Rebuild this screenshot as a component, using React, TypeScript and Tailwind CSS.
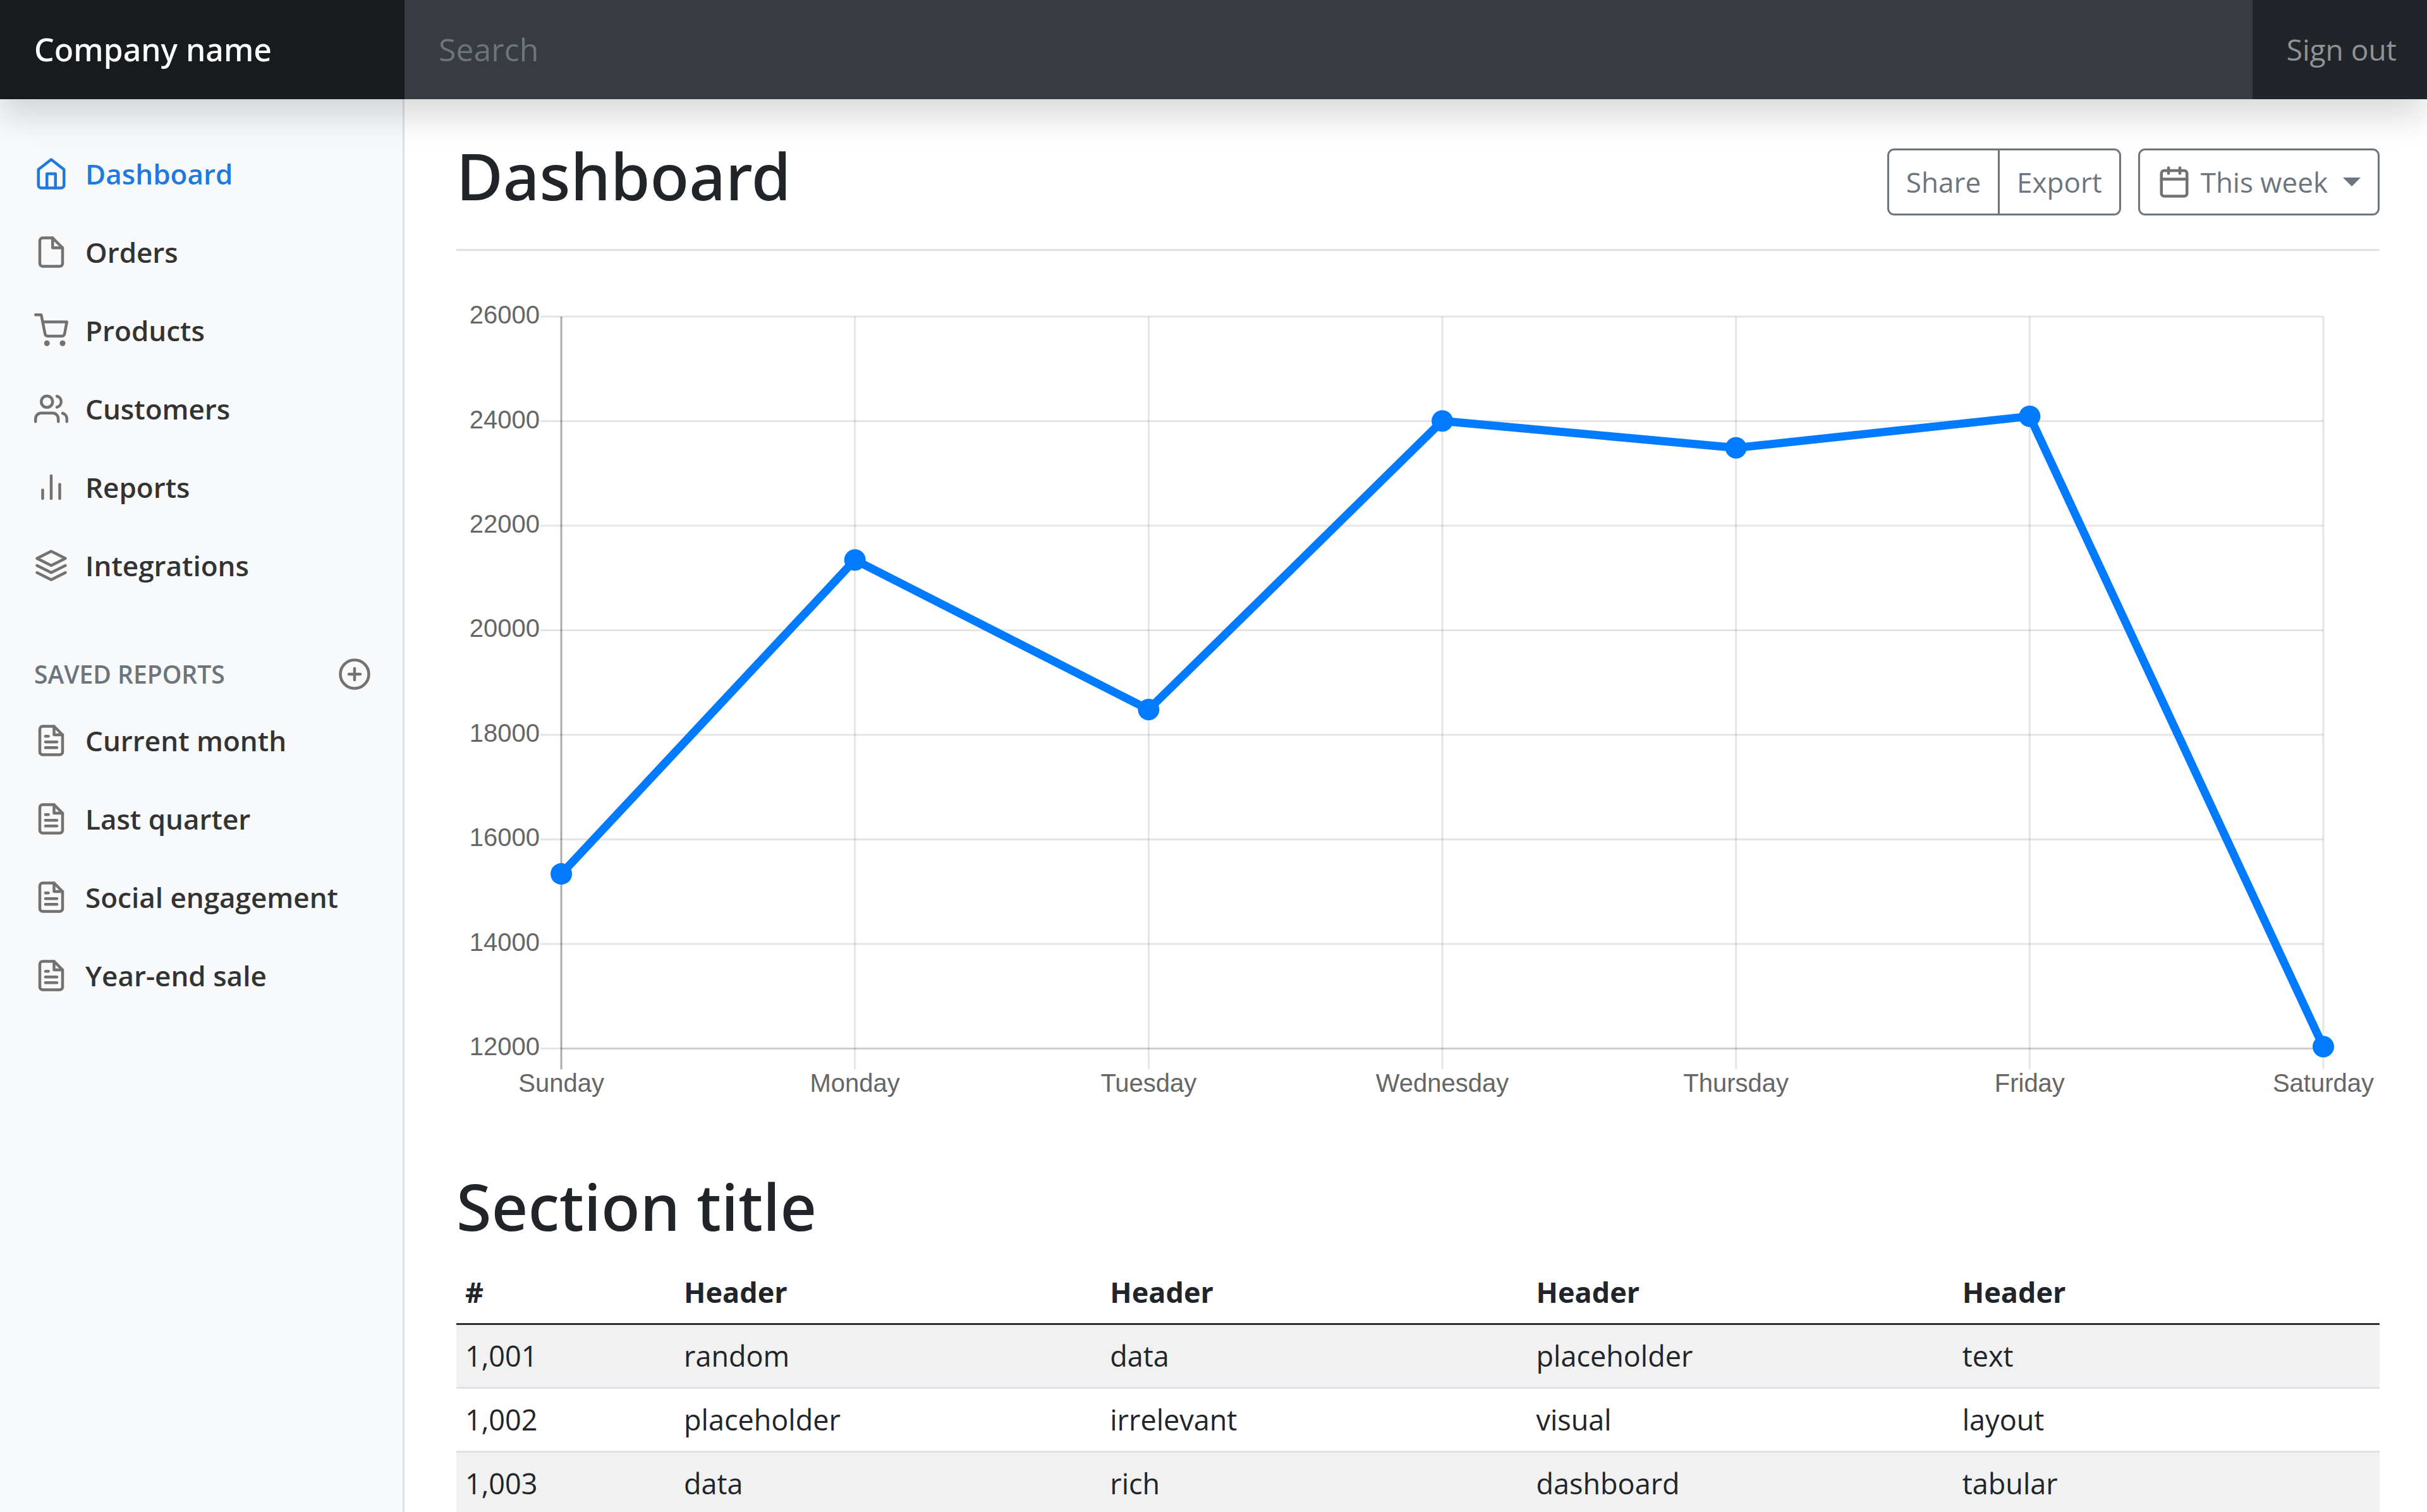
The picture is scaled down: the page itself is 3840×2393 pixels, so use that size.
import {
  FiBarChart2,
  FiCalendar,
  FiFile,
  FiFileText,
  FiHome,
  FiLayers,
  FiPlusCircle,
  FiShoppingCart,
  FiUsers,
} from "react-icons/fi";
import type { IconType } from "react-icons";

interface NavItem {
  label: string;
  icon: IconType;
  active?: boolean;
}

const mainNav: NavItem[] = [
  { label: "Dashboard", icon: FiHome, active: true },
  { label: "Orders", icon: FiFile },
  { label: "Products", icon: FiShoppingCart },
  { label: "Customers", icon: FiUsers },
  { label: "Reports", icon: FiBarChart2 },
  { label: "Integrations", icon: FiLayers },
];

const savedReports: NavItem[] = [
  { label: "Current month", icon: FiFileText },
  { label: "Last quarter", icon: FiFileText },
  { label: "Social engagement", icon: FiFileText },
  { label: "Year-end sale", icon: FiFileText },
];

const traffic = [
  { day: "Sunday", value: 15339 },
  { day: "Monday", value: 21345 },
  { day: "Tuesday", value: 18483 },
  { day: "Wednesday", value: 24003 },
  { day: "Thursday", value: 23489 },
  { day: "Friday", value: 24092 },
  { day: "Saturday", value: 12034 },
];

const ticks = [26000, 24000, 22000, 20000, 18000, 16000, 14000, 12000];

const rows = [
  ["1,001", "random", "data", "placeholder", "text"],
  ["1,002", "placeholder", "irrelevant", "visual", "layout"],
  ["1,003", "data", "rich", "dashboard", "tabular"],
];

function NavList({ items }: { items: NavItem[] }) {
  return (
    <ul>
      {items.map(({ label, icon: Icon, active }) => (
        <li key={label}>
          <a
            href="#"
            aria-current={active ? "page" : undefined}
            className={`flex h-[124px] items-center gap-[27px] px-[54px] text-[44px] font-semibold whitespace-nowrap ${
              active ? "text-[#2079dc]" : "text-[#333333]"
            }`}
          >
            <Icon size={54} className={active ? "shrink-0" : "shrink-0 text-[#727272]"} />
            {label}
          </a>
        </li>
      ))}
    </ul>
  );
}

// Plot area inside the 3042 x 1310 viewBox
const LEFT = 166;
const RIGHT = 2953;
const TOP = 61;
const BOTTOM = 1219;

const xAt = (i: number) => LEFT + (i * (RIGHT - LEFT)) / (traffic.length - 1);
const yAt = (v: number) => BOTTOM - ((v - 12000) / 14000) * (BOTTOM - TOP);

function Chart() {
  const points = traffic.map((d, i) => `${xAt(i)},${yAt(d.value)}`).join(" ");

  return (
    <svg
      viewBox="0 0 3042 1310"
      role="img"
      aria-label="Weekly traffic"
      className="mt-[43px] block w-full font-['Liberation_Sans',Arial,sans-serif] text-[40px]"
    >
      {ticks.map((t) => (
        <g key={t}>
          <line x1={LEFT - 33} x2={RIGHT} y1={yAt(t)} y2={yAt(t)} stroke="#000" strokeOpacity={0.1} strokeWidth={3} />
          <text x={LEFT - 34} y={yAt(t) + 11} textAnchor="end" fill="#666">
            {t}
          </text>
        </g>
      ))}
      {traffic.map((d, i) => (
        <g key={d.day}>
          <line x1={xAt(i)} x2={xAt(i)} y1={TOP} y2={BOTTOM + 33} stroke="#000" strokeOpacity={0.1} strokeWidth={3} />
          <text x={xAt(i)} y={BOTTOM + 69} textAnchor="middle" fill="#666">
            {d.day}
          </text>
        </g>
      ))}

      {/* Axes */}
      <line x1={LEFT} x2={LEFT} y1={TOP} y2={BOTTOM + 33} stroke="#000" strokeOpacity={0.25} strokeWidth={3} />
      <line x1={LEFT} x2={RIGHT} y1={BOTTOM} y2={BOTTOM} stroke="#000" strokeOpacity={0.1} strokeWidth={3} />

      <polyline points={points} fill="none" stroke="#007bff" strokeWidth={13} strokeLinejoin="round" />
      {traffic.map((d, i) => (
        <circle key={d.day} cx={xAt(i)} cy={yAt(d.value)} r={17} fill="#007bff" />
      ))}
    </svg>
  );
}

export default function App() {
  return (
    <div className="flex h-screen flex-col overflow-hidden bg-white font-['Open_Sans','Noto_Sans',sans-serif] text-[#212529]">
      <header className="relative z-10 flex h-[157px] shrink-0 bg-[#212529] shadow-[0_27px_54px_rgba(0,0,0,0.15)]">
        <a
          href="#"
          className="flex w-1/6 items-center bg-black/25 px-[54px] font-['Noto_Sans','Open_Sans',sans-serif] text-[50px] font-medium whitespace-nowrap text-white"
        >
          Company name
        </a>
        <input
          type="search"
          aria-label="Search"
          placeholder="Search"
          className="min-w-0 flex-1 bg-[#383b3f] px-[54px] text-[50px] text-white outline-none placeholder:text-[#6c757d]"
        />
        <a href="#" className="flex items-center pr-[48px] pl-[54px] text-[46px] whitespace-nowrap text-white/50">
          Sign out
        </a>
      </header>

      <div className="flex min-h-0 flex-1">
        <nav className="w-1/6 shrink-0 border-r-3 border-black/10 bg-[#f8f9fa] pt-[56px]">
          <NavList items={mainNav} />
          <div className="mt-[72px] mb-[5px] flex h-[76px] items-center justify-between pr-[49px] pl-[54px] text-[#6c757d]">
            <h2 className="text-[39px] font-semibold uppercase">Saved reports</h2>
            <button type="button" aria-label="Add a new report">
              <FiPlusCircle size={54} className="text-[#727272]" />
            </button>
          </div>
          <NavList items={savedReports} />
        </nav>

        <main className="min-w-0 flex-1 pt-[54px] pr-[75px] pl-[82px]">
          <div className="flex h-[186px] items-start justify-between border-b-3 border-[#dee2e6]">
            <h1 className="font-['Noto_Sans','Open_Sans',sans-serif] text-[101px] leading-[134px] font-medium">
              Dashboard
            </h1>
            <div className="mt-[24px] flex h-[106px] items-stretch gap-[27px] text-[44px] text-[#6c757d]">
              <div className="flex">
                <button type="button" className="rounded-l-[11px] border-3 border-[#6c757d] px-[27px]">
                  Share
                </button>
                <button type="button" className="-ml-[3px] rounded-r-[11px] border-3 border-[#6c757d] px-[27px]">
                  Export
                </button>
              </div>
              <button
                type="button"
                className="flex items-center rounded-[11px] border-3 border-[#6c757d] px-[27px]"
              >
                <FiCalendar size={54} className="mr-[15px] text-[#727272]" />
                This week
                <span className="ml-[24px] border-x-14 border-t-14 border-x-transparent border-t-[#6c757d]" />
              </button>
            </div>
          </div>

          <Chart />

          <h2 className="mt-[92px] font-['Noto_Sans','Open_Sans',sans-serif] text-[101px] leading-[134px] font-medium">
            Section title
          </h2>
          <table className="mt-[20px] w-full table-fixed text-left text-[45px] leading-[70px]">
            <thead>
              <tr className="border-b-3 border-[#2c3034]">
                <th className="w-[346px] px-[14px] py-[14px] font-bold">#</th>
                <th className="px-[14px] font-bold">Header</th>
                <th className="px-[14px] font-bold">Header</th>
                <th className="px-[14px] font-bold">Header</th>
                <th className="px-[14px] font-bold">Header</th>
              </tr>
            </thead>
            <tbody>
              {rows.map((row) => (
                <tr key={row[0]} className="border-b-3 border-[#dee2e6] odd:bg-[#f1f1f1]">
                  {row.map((cell) => (
                    <td key={cell} className="px-[14px] py-[14px]">
                      {cell}
                    </td>
                  ))}
                </tr>
              ))}
            </tbody>
          </table>
        </main>
      </div>
    </div>
  );
}
